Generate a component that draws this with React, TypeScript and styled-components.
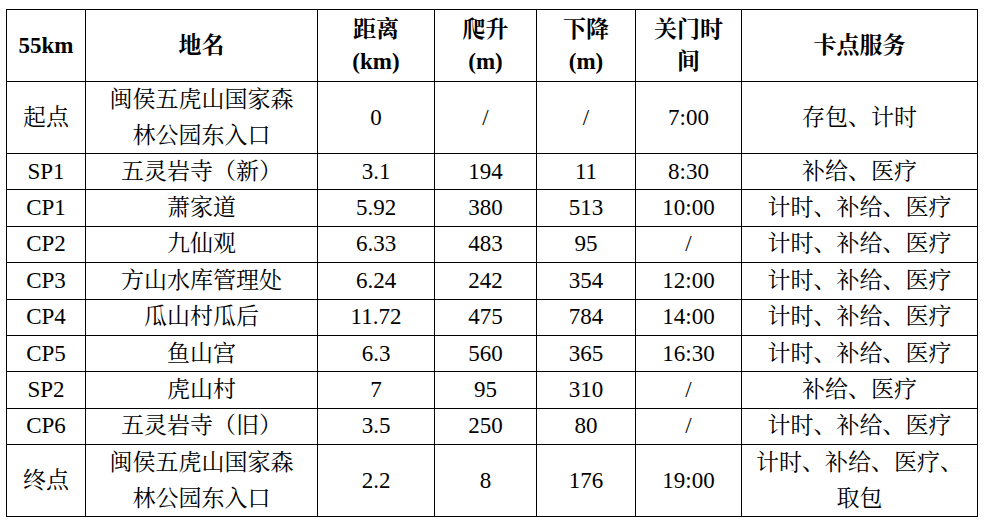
import * as React from 'react';
import styled, { createGlobalStyle } from 'styled-components';

const GlobalStyle = createGlobalStyle`
  html,
  body {
    margin: 0;
    padding: 0;
    background: #ffffff;
  }

  body {
    padding: 9px 0 0 6px;
    font-family: 'Liberation Serif', 'Noto Serif CJK SC', 'Noto Sans CJK SC', serif;
    color: #000000;
  }
`;

const Table = styled.div`
  display: grid;
  grid-template-columns: 79px 232px 117px 102px 99px 106px 236px;
  grid-template-rows: 72px 72px repeat(8, 36.4px) 72px;
  width: max-content;
  border-top: 1px solid #000;
  border-left: 1px solid #000;
`;

const Cell = styled.div<{ $head?: boolean }>`
  display: flex;
  align-items: center;
  justify-content: center;
  text-align: center;
  border-right: 1px solid #000;
  border-bottom: 1px solid #000;
  font-size: 23px;
  font-weight: ${p => (p.$head ? 700 : 400)};
  line-height: ${p => (p.$head ? '32px' : '36px')};
  color: #000;
  white-space: nowrap;
`;

type Row = {
  id: string;
  place: string[];
  dist: string;
  up: string;
  down: string;
  close: string;
  service: string[];
};

const headers: string[][] = [
  ['55km'],
  ['地名'],
  ['距离', '(km)'],
  ['爬升', '(m)'],
  ['下降', '(m)'],
  ['关门时', '间'],
  ['卡点服务']
];

const rows: Row[] = [
  { id: '起点', place: ['闽侯五虎山国家森', '林公园东入口'], dist: '0', up: '/', down: '/', close: '7:00', service: ['存包、计时'] },
  { id: 'SP1', place: ['五灵岩寺（新）'], dist: '3.1', up: '194', down: '11', close: '8:30', service: ['补给、医疗'] },
  { id: 'CP1', place: ['萧家道'], dist: '5.92', up: '380', down: '513', close: '10:00', service: ['计时、补给、医疗'] },
  { id: 'CP2', place: ['九仙观'], dist: '6.33', up: '483', down: '95', close: '/', service: ['计时、补给、医疗'] },
  { id: 'CP3', place: ['方山水库管理处'], dist: '6.24', up: '242', down: '354', close: '12:00', service: ['计时、补给、医疗'] },
  { id: 'CP4', place: ['瓜山村瓜后'], dist: '11.72', up: '475', down: '784', close: '14:00', service: ['计时、补给、医疗'] },
  { id: 'CP5', place: ['鱼山宫'], dist: '6.3', up: '560', down: '365', close: '16:30', service: ['计时、补给、医疗'] },
  { id: 'SP2', place: ['虎山村'], dist: '7', up: '95', down: '310', close: '/', service: ['补给、医疗'] },
  { id: 'CP6', place: ['五灵岩寺（旧）'], dist: '3.5', up: '250', down: '80', close: '/', service: ['计时、补给、医疗'] },
  { id: '终点', place: ['闽侯五虎山国家森', '林公园东入口'], dist: '2.2', up: '8', down: '176', close: '19:00', service: ['计时、补给、医疗、', '取包'] }
];

const Lines = ({ parts }: { parts: string[] }) => (
  <span>
    {parts.map((p, i) => (
      <React.Fragment key={i}>
        {i > 0 && <br />}
        {p}
      </React.Fragment>
    ))}
  </span>
);

export default function App() {
  return (
    <>
      <GlobalStyle />
      <Table>
        {headers.map((h, i) => (
          <Cell key={'h' + i} $head>
            <Lines parts={h} />
          </Cell>
        ))}
        {rows.map(r => (
          <React.Fragment key={r.id}>
            <Cell>{r.id}</Cell>
            <Cell>
              <Lines parts={r.place} />
            </Cell>
            <Cell>{r.dist}</Cell>
            <Cell>{r.up}</Cell>
            <Cell>{r.down}</Cell>
            <Cell>{r.close}</Cell>
            <Cell>
              <Lines parts={r.service} />
            </Cell>
          </React.Fragment>
        ))}
      </Table>
    </>
  );
}
